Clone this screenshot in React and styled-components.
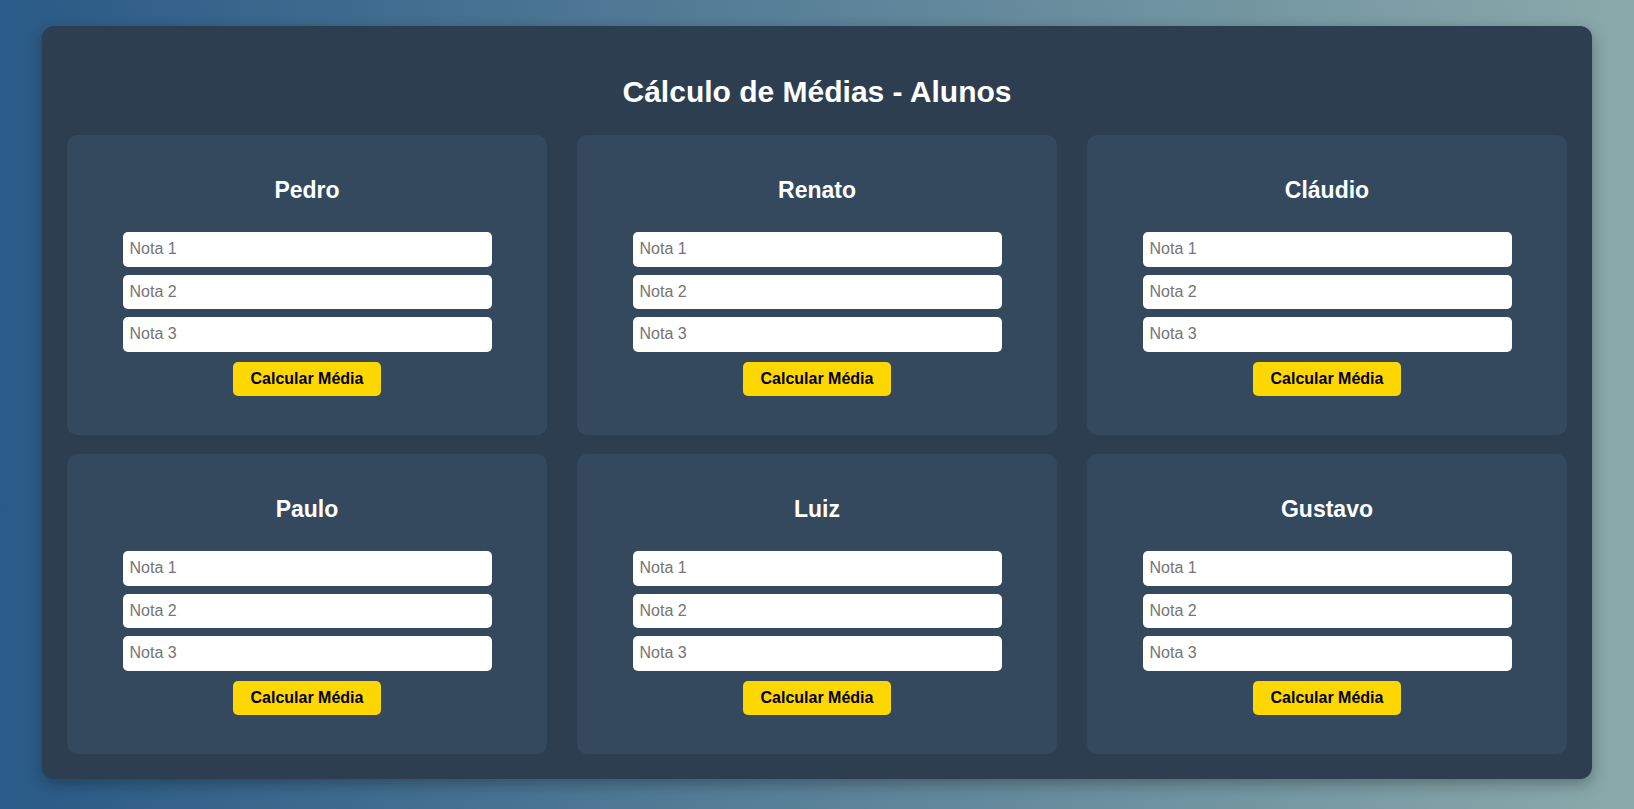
import styled, { createGlobalStyle } from "styled-components";

const alunos = ["Pedro", "Renato", "Cláudio", "Paulo", "Luiz", "Gustavo"];

const GlobalStyle = createGlobalStyle`
    * {
        box-sizing: border-box;
    }
    body {
        margin: 0;
        min-height: 100vh;
        font-family: "Liberation Sans", Arial, sans-serif;
        background: linear-gradient(to right, #2a5a87, #8aa9aa);
    }
`;

export default function App() {
    return (
        <>
            <GlobalStyle />
            <Page>
                <Container>
                    <Title>Cálculo de Médias - Alunos</Title>
                    <Grid>
                        {alunos.map(nome => (
                            <Card key={nome}>
                                <Name>{nome}</Name>
                                <Input type="number" placeholder="Nota 1" />
                                <Input type="number" placeholder="Nota 2" />
                                <Input type="number" placeholder="Nota 3" />
                                <Button>Calcular Média</Button>
                            </Card>
                        ))}
                    </Grid>
                </Container>
            </Page>
        </>
    );
}

const Page = styled.div`
    padding: 26px 0 30px;
    display: flex;
    justify-content: center;
`;
const Container = styled.div`
    width: 1550px;
    background: #2c3e50;
    border-radius: 12px;
    padding: 25px;
    box-shadow: 0 5px 15px rgba(0, 0, 0, 0.3);
`;
const Title = styled.h1`
    margin: 24px 0 26px;
    text-align: center;
    color: #fff;
    font-size: 30px;
    font-weight: 700;
`;
const Grid = styled.div`
    display: grid;
    grid-template-columns: repeat(3, 480px);
    column-gap: 30px;
    row-gap: 19px;
`;
const Card = styled.div`
    background: #34495e;
    border-radius: 10px;
    padding: 20px 20px 39px;
    display: flex;
    flex-direction: column;
    align-items: center;
`;
const Name = styled.h2`
    margin: 22px 0 28px;
    color: #fff;
    font-size: 23px;
    font-weight: 700;
`;
const Input = styled.input`
    width: 369px;
    height: 34.5px;
    padding: 0 7px;
    margin-bottom: 8px;
    border: none;
    border-radius: 5px;
    background: #fff;
    font-family: "Liberation Sans", Arial, sans-serif;
    font-size: 16px;
    outline: none;
    &::placeholder {
        color: #757575;
    }
    &::-webkit-inner-spin-button,
    &::-webkit-outer-spin-button {
        -webkit-appearance: none;
        margin: 0;
    }
`;
const Button = styled.button`
    margin-top: 2px;
    height: 34.5px;
    padding: 0 18px;
    border: none;
    border-radius: 5px;
    background: #ffd700;
    color: #000;
    font-family: "Liberation Sans", Arial, sans-serif;
    font-size: 16px;
    font-weight: 700;
    cursor: pointer;
`;
